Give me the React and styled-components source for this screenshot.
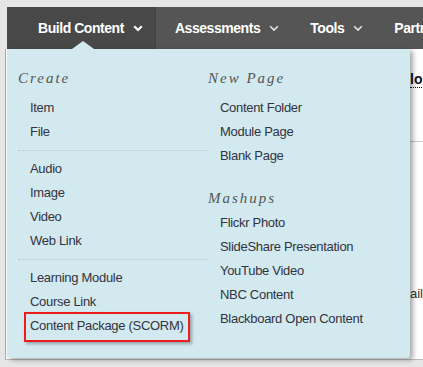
import React from 'react';
import styled, { createGlobalStyle } from 'styled-components';

const GlobalStyle = createGlobalStyle`
  html, body {
    margin: 0;
    padding: 0;
    background: #e6e6e6;
    font-family: 'Liberation Sans', Arial, sans-serif;
  }
`;

const tabs = [
  { label: 'Build Content', active: true },
  { label: 'Assessments' },
  { label: 'Tools' },
  { label: 'Partner' },
];

const columns = [
  [
    { title: 'Create', groups: [['Item', 'File'], ['Audio', 'Image', 'Video', 'Web Link'], ['Learning Module', 'Course Link', 'Content Package (SCORM)']] },
  ],
  [
    { title: 'New Page', groups: [['Content Folder', 'Module Page', 'Blank Page']] },
    { title: 'Mashups', tight: true, groups: [['Flickr Photo', 'SlideShare Presentation', 'YouTube Video', 'NBC Content', 'Blackboard Open Content']] },
  ],
];

const highlighted = 'Content Package (SCORM)';

function Chevron({ bold }) {
  return (
    <svg width="10" height="7" viewBox="0 0 10 7">
      <path
        d="M1.2 1.2 L5 5 L8.8 1.2"
        fill="none"
        stroke={bold ? '#ffffff' : '#e4e4e4'}
        strokeWidth={bold ? 2.2 : 1.6}
      />
    </svg>
  );
}

function App() {
  return (
    <Page>
      <GlobalStyle />
      <NavWrap>
        <NavBar>
          {tabs.map((tab) => (
            <Tab key={tab.label} $active={tab.active}>
              {tab.label}
              {tab.label !== 'Partner' && <Chevron bold={tab.active} />}
            </Tab>
          ))}
        </NavBar>
        <Menu>
          <Notch />
          {columns.map((sections, i) => (
            <Column key={i}>
              {sections.map((section) => (
                <Section key={section.title}>
                  <Heading $tight={section.tight}>{section.title}</Heading>
                  {section.groups.map((group, g) => (
                    <Group key={g} $divided={g > 0}>
                      {group.map((item) => (
                        <Item key={item}>
                          <ItemText $marked={item === highlighted}>{item}</ItemText>
                        </Item>
                      ))}
                    </Group>
                  ))}
                </Section>
              ))}
            </Column>
          ))}
        </Menu>
      </NavWrap>
      <Content>
        <Underlined>lo</Underlined>
        <Rule />
        <Trail>ail</Trail>
      </Content>
    </Page>
  );
}

const Page = styled.div`
  padding-top: 7px;
  width: 423px;
  height: 367px;
  box-sizing: border-box;
  overflow: hidden;
`;

const NavWrap = styled.div`
  position: relative;
  margin-left: 7px;
`;

const NavBar = styled.div`
  display: flex;
  height: 42px;
  background: #555555;
  white-space: nowrap;
  overflow: hidden;
`;

const Tab = styled.div`
  display: flex;
  align-items: center;
  gap: 9px;
  padding: 0 12px 0 ${(p) => (p.$active ? '31px' : '19px')};
  background: ${(p) => (p.$active ? '#484848' : 'transparent')};
  border-right: ${(p) => (p.$active ? '1px solid #444' : 'none')};
  color: #ffffff;
  font-size: 14px;
  letter-spacing: -0.45px;
  font-weight: bold;
`;

const Menu = styled.div`
  position: absolute;
  top: 42px;
  left: 0;
  width: 403px;
  box-sizing: border-box;
  padding: 17px 0 20px 11px;
  background: #d2e9ef;
  display: grid;
  grid-template-columns: 190px 1fr;
  box-shadow: 3px 2px 5px rgba(0, 0, 0, 0.35);
  border-radius: 0 0 3px 3px;
  z-index: 2;
`;

const Notch = styled.div`
  position: absolute;
  top: -8px;
  left: 65px;
  width: 0;
  height: 0;
  border-left: 11px solid transparent;
  border-right: 11px solid transparent;
  border-bottom: 8px solid #d2e9ef;
`;

const Column = styled.div`
  display: flex;
  flex-direction: column;
  gap: 18px;
`;

const Section = styled.div`
  display: flex;
  flex-direction: column;
`;

const Heading = styled.div`
  font-family: 'Liberation Serif', 'Times New Roman', serif;
  font-style: italic;
  font-size: 15px;
  letter-spacing: 2px;
  line-height: 24px;
  color: #555555;
  margin-bottom: ${(p) => (p.$tight ? '1px' : '6px')};
`;

const Group = styled.div`
  display: flex;
  flex-direction: column;
  ${(p) =>
    p.$divided &&
    `
    border-top: 1px dotted #b9c4c8;
    margin-top: 6px;
    padding-top: 6px;
  `}
`;

const Item = styled.div`
  padding-left: 12px;
  line-height: 24px;
  font-size: 13px;
  letter-spacing: -0.3px;
  color: #333340;
`;

const ItemText = styled.span`
  position: relative;
  &::after {
    content: '';
    display: ${(p) => (p.$marked ? 'block' : 'none')};
    position: absolute;
    left: -6px;
    top: -6px;
    width: 166px;
    height: 30px;
    box-sizing: border-box;
    border: 2px solid #ee1c1c;
    box-shadow: 2px 2px 3px rgba(0, 0, 0, 0.3);
  }
`;

const Content = styled.div`
  margin-left: 5px;
  height: 311px;
  box-sizing: border-box;
  padding: 23px 0 0 404px;
  background: #ffffff;
  border-left: 1px solid #aaaaaa;
  border-bottom: 1px solid #bbbbbb;
  display: flex;
  flex-direction: column;
  align-items: flex-start;
`;

const Underlined = styled.span`
  font-size: 14px;
  line-height: 15px;
  font-weight: bold;
  color: #111;
  border-bottom: 1px dotted #111;
`;

const Rule = styled.div`
  margin-top: 53px;
  width: 20px;
  border-top: 1px solid #cccccc;
`;

const Trail = styled.div`
  margin-top: 144px;
  font-size: 13px;
  color: #333;
`;

export default App;
